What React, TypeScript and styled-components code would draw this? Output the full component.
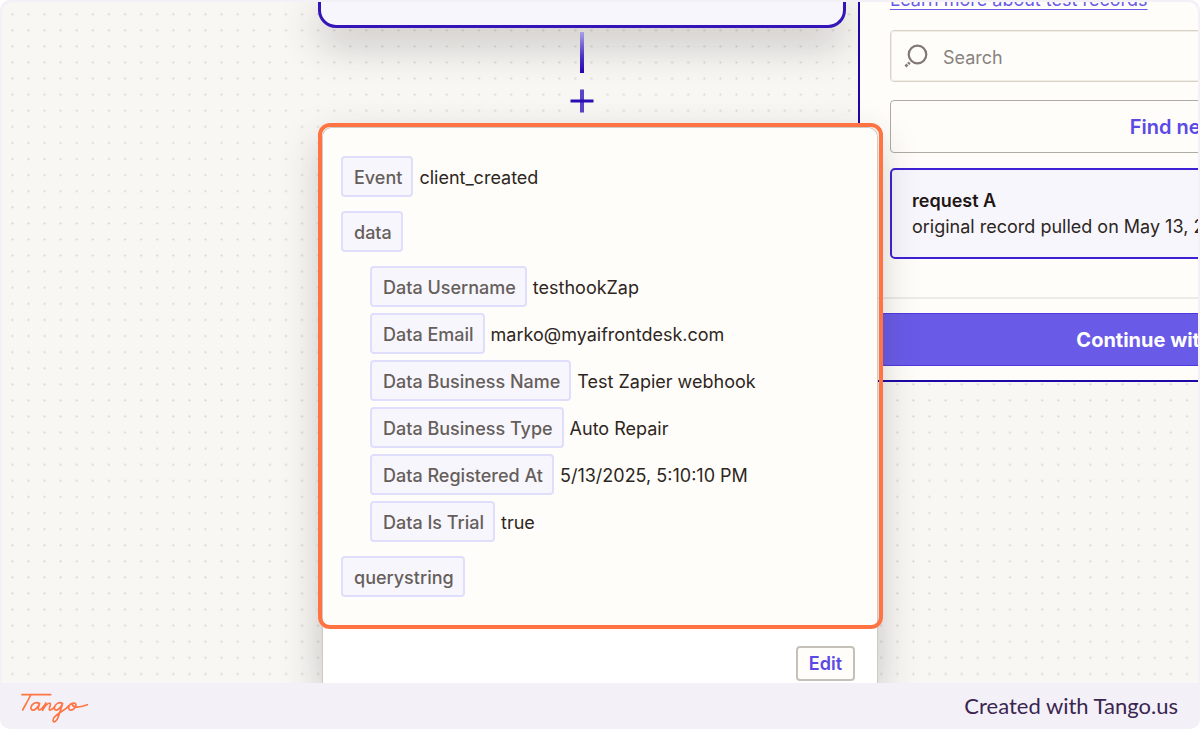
import React from "react";
import styled, { createGlobalStyle, css } from "styled-components";

const GlobalStyle = createGlobalStyle`
  *, *::before, *::after { box-sizing: border-box; }
  body { margin: 0; background: #fff; font-family: Inter, "Liberation Sans", sans-serif; font-size: 18px; line-height: 24px; color: #2d2622; }
  button, input { font: inherit; }
`;

const Frame = styled.div`
  padding: 2px 2px 0;
  border-radius: 10px;
  background: #f3f1f7;
`;

const Canvas = styled.main`
  position: relative;
  display: flex;
  align-items: flex-start;
  overflow: hidden;
  border-radius: 10px 10px 0 0;
  background: #f8f7f4;
`;

const DotGrid = styled.svg`
  position: absolute;
  inset: 0;
  width: 100%;
  height: 100%;
`;

const FlowColumn = styled.section`
  flex: none;
  width: 565px;
  margin-left: 316px;
`;

const StepNode = styled.div`
  position: relative;
  width: 528px;
  height: 26px;
  border: 3px solid #3415b8;
  border-top: 0;
  border-radius: 0 0 18px 18px;
  background: #f7f6fd;
  box-shadow: 0 14px 40px rgba(45, 38, 34, 0.3);
`;

const Connector = styled.div`
  position: relative;
  display: flex;
  flex-direction: column;
  align-items: center;
  gap: 8px;
  width: 528px;
  padding: 4px 0 5px;
`;

const ConnectorLine = styled.span`
  width: 4px;
  height: 41px;
  background: linear-gradient(#a9a0e8, #4a30c4 60%, #2404b0);
`;

const AddStep = styled.button`
  display: grid;
  place-items: center;
  width: 40px;
  height: 40px;
  padding: 0;
  border: 0;
  border-radius: 50%;
  background: #f8f7f4;
`;

const DataCard = styled.article`
  position: relative;
  z-index: 2;
  width: 556px;
  margin: 1px 0 0 4px;
  border: 1px solid #cfcbc3;
  border-bottom: 0;
  border-radius: 10px 10px 0 0;
  background: #fff;
  box-shadow: 0 14px 40px rgba(45, 38, 34, 0.26);
`;

const Fields = styled.div`
  display: flex;
  flex-direction: column;
  gap: 14px;
  padding: 28px 18px;
  border-radius: 10px 10px 0 0;
  background: #fffdf9;
`;

const Highlight = styled.div`
  position: absolute;
  inset: -5px -6px 54px -5px;
  border: 4px solid #ff7442;
  border-radius: 12px;
  pointer-events: none;
`;

const NestedFields = styled.div`
  display: flex;
  flex-direction: column;
  gap: 6px;
  padding-left: 29px;
`;

const FieldRow = styled.div`
  display: flex;
  align-items: center;
  gap: 6px;
`;

const Chip = styled.span`
  padding: 8px 9px 5px 11px;
  border: 2px solid #dfdefc;
  border-radius: 4px;
  background: #f7f6fd;
  color: #665e5a;
  font-weight: 500;
`;

const FieldValue = styled.span`
  padding-top: 3px;
`;

const CardFooter = styled.footer`
  display: flex;
  justify-content: flex-end;
  margin: 0 22px;
  padding: 20px 0 2px;
  border-top: 1px solid #e4e2dd;
`;

const SidePanel = styled.aside`
  position: relative;
  z-index: 1;
  flex: none;
  width: 708px;
  margin: -14px 0 0 -25px;
  border-left: 2px solid #1c08a6;
  border-bottom: 2px solid #1c08a6;
  background: #fffdf9;
`;

const PanelBody = styled.div`
  display: flex;
  flex-direction: column;
  align-items: stretch;
  padding: 0 30px 38px;
`;

const LearnLink = styled.a`
  align-self: flex-start;
  color: #695be8;
  text-underline-offset: 3px;
`;

const SearchBox = styled.label`
  display: flex;
  align-items: center;
  gap: 14px;
  height: 52px;
  margin-top: 18px;
  padding: 0 12px;
  border: 1px solid #d7d3c9;
  border-radius: 4px;
  outline: 1px solid #f0ede7;
  outline-offset: -2px;
`;

const SearchInput = styled.input`
  flex: 1;
  min-width: 0;
  padding: 3px 0 0;
  border: 0;
  outline: 0;
  background: transparent;
  &::placeholder { color: #88827e; opacity: 1; }
`;

const Button = styled.button<{ $kind: "outline" | "primary" | "small" }>`
  border-radius: 4px;
  background: #fffdf9;
  color: #5b49e4;
  font-weight: 600;
  ${(p) =>
    p.$kind === "small"
      ? css`
          height: 35px;
          padding: 0 11px;
          border: 2px solid #c5c1b9;
        `
      : css`
          height: 53px;
          font-size: 20px;
          border: 1px solid #aeaba3;
        `}
  ${(p) =>
    p.$kind === "primary" &&
    css`
      flex: 1;
      border-color: #5038e0;
      background: #695be8;
      color: #fff;
      font-weight: 700;
    `}
`;

const RecordCard = styled.div`
  margin-top: 15px;
  padding: 18px 20px 17px;
  border: 2px solid #3d22d4;
  border-radius: 5px;
  background: #f7f6fd;
  line-height: 26px;
  white-space: nowrap;
`;

const RecordTitle = styled.strong`
  display: block;
  color: #1f1714;
  font-weight: 600;
`;

const PanelFooter = styled.footer`
  display: flex;
  padding: 14px 0 14px 20px;
  border-top: 2px solid #ecebe7;
`;

const FindSlot = styled.div`
  display: grid;
  margin-top: 18px;
`;

const PageFooter = styled.footer`
  display: flex;
  align-items: center;
  justify-content: space-between;
  height: 46px;
  padding: 0 20px 0 18px;
  color: #3b2551;
  font-family: Lato, sans-serif;
  font-size: 22px;
`;

type Field = { name: string; value?: string };

const nested: Field[] = [
  { name: "Data Username", value: "testhookZap" },
  { name: "Data Email", value: "marko@myaifrontdesk.com" },
  { name: "Data Business Name", value: "Test Zapier webhook" },
  { name: "Data Business Type", value: "Auto Repair" },
  { name: "Data Registered At", value: "5/13/2025, 5:10:10 PM" },
  { name: "Data Is Trial", value: "true" },
];

const FieldLine = ({ name, value }: Field) => (
  <FieldRow>
    <Chip>{name}</Chip>
    {value && <FieldValue>{value}</FieldValue>}
  </FieldRow>
);

const TangoLogo = () => (
  <svg width="72" height="34" viewBox="30 12 216 102" fill="none" stroke="#ff7442" strokeWidth="5" strokeLinecap="round" strokeLinejoin="round" role="img" aria-label="Tango">
    <path d="M36 29H122M62 30C55 45 46 60 38 75" />
    <path d="M88 56C80 48 66 56 63 66C61 76 70 78 77 72C83 67 87 60 89 55C86 63 82 75 88 75C93 75 98 69 108 54C104 62 101 69 98 76C104 65 113 53 120 55C125 58 114 72 119 75C124 77 130 70 134 66" />
    <path d="M157 56C148 48 135 58 133 67C132 77 141 77 147 71C152 66 156 60 158 55C155 66 150 80 145 95C140 110 130 115 129 106C128 96 145 85 158 77C165 73 172 68 176 62" />
    <path d="M187 55C178 57 173 68 178 74C184 79 197 70 198 60C198 54 190 52 187 57C186 64 197 68 205 66C214 65 224 62 232 59" />
  </svg>
);

export default function App() {
  return (
    <>
      <GlobalStyle />
      <Frame>
        <Canvas>
          <DotGrid aria-hidden="true">
            <defs>
              <pattern id="dots" x="2.4" y="4.3" width="16.09" height="16.09" patternUnits="userSpaceOnUse">
                <circle cx="8" cy="8" r="1.1" fill="#d9d7d3" />
              </pattern>
            </defs>
            <rect width="100%" height="100%" fill="url(#dots)" />
          </DotGrid>
          <FlowColumn>
            <StepNode />
            <Connector>
              <ConnectorLine />
              <AddStep type="button" aria-label="Add step">
                <svg width="24" height="24" viewBox="0 0 24 24" fill="none" strokeWidth="3">
                  <path d="M12 .5V23.5" stroke="#5a43c8" strokeWidth="4" />
                  <path d="M.5 12H23.5" stroke="#2a0fb2" />
                </svg>
              </AddStep>
            </Connector>
            <DataCard>
              <Fields>
                <FieldLine name="Event" value="client_created" />
                <FieldLine name="data" />
                <NestedFields>
                  {nested.map((f) => (
                    <FieldLine key={f.name} {...f} />
                  ))}
                </NestedFields>
                <FieldLine name="querystring" />
              </Fields>
              <CardFooter>
                <Button type="button" $kind="small">Edit</Button>
              </CardFooter>
              <Highlight />
            </DataCard>
          </FlowColumn>
          <SidePanel>
            <PanelBody>
              <LearnLink href="#">Learn more about test records</LearnLink>
              <SearchBox>
                <svg width="26" height="26" viewBox="0 0 26 26" fill="none" stroke="#807975" strokeWidth="2.2" aria-hidden="true">
                  <circle cx="14.5" cy="11.5" r="8.8" />
                  <path d="M2.5 23.5L4.4 21.6M5.2 20.9L6.6 19.5" strokeWidth="2.8" />
                </svg>
                <SearchInput type="text" placeholder="Search" aria-label="Search" />
              </SearchBox>
              <FindSlot>
                <Button type="button" $kind="outline">Find new records</Button>
              </FindSlot>
              <RecordCard>
                <RecordTitle>request A</RecordTitle>
                original record pulled on May 13, 2025
              </RecordCard>
            </PanelBody>
            <PanelFooter>
              <Button type="button" $kind="primary">Continue with selected record</Button>
            </PanelFooter>
          </SidePanel>
        </Canvas>
        <PageFooter>
          <TangoLogo />
          <span>Created with Tango.us</span>
        </PageFooter>
      </Frame>
    </>
  );
}
